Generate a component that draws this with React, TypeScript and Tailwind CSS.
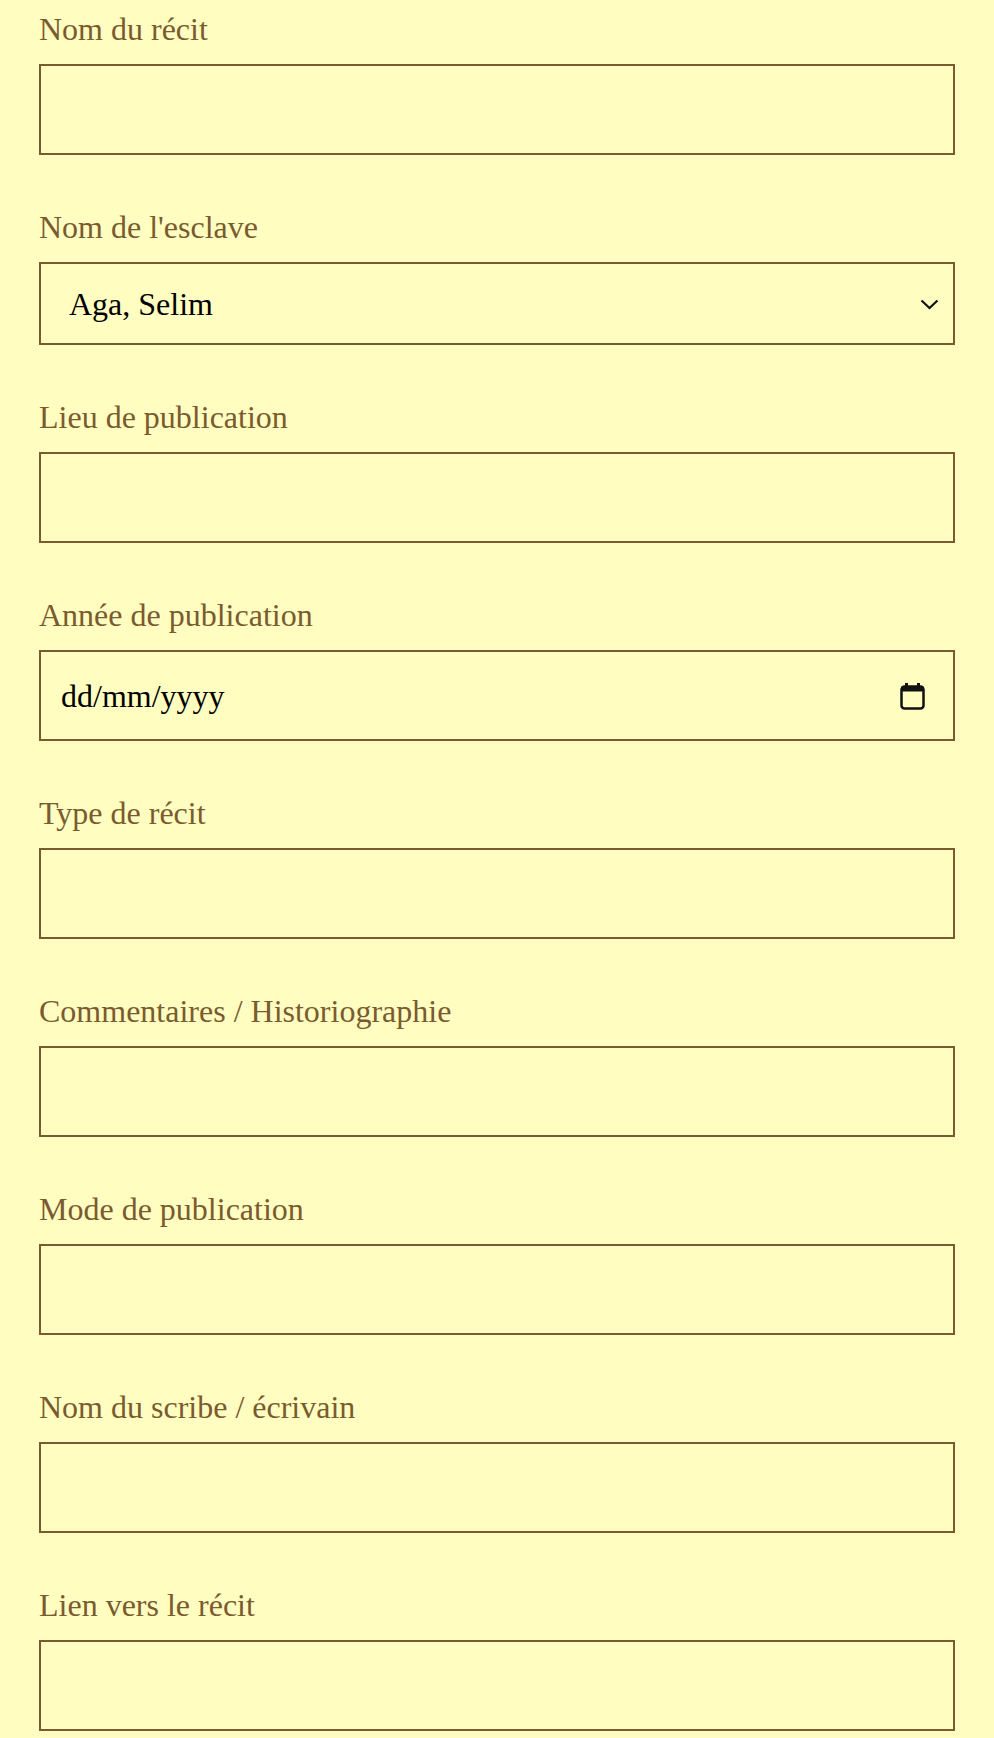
import React from 'react'

const fields = [
  { label: 'Nom du récit', kind: 'text' },
  { label: "Nom de l'esclave", kind: 'select' },
  { label: 'Lieu de publication', kind: 'text' },
  { label: 'Année de publication', kind: 'date' },
  { label: 'Type de récit', kind: 'text' },
  { label: 'Commentaires / Historiographie', kind: 'text' },
  { label: 'Mode de publication', kind: 'text' },
  { label: 'Nom du scribe / écrivain', kind: 'text' },
  { label: 'Lien vers le récit', kind: 'text' },
]

function CalendarIcon() {
  return (
    <svg width="25" height="28" viewBox="0 0 25 28" fill="none">
      <rect x="1.5" y="4.5" width="22" height="22" rx="3" stroke="#111" strokeWidth="2.5" />
      <rect x="1.5" y="4.5" width="22" height="5" fill="#111" />
      <rect x="5" y="1" width="3" height="5" fill="#111" />
      <rect x="17" y="1" width="3" height="5" fill="#111" />
    </svg>
  )
}

function Chevron() {
  return (
    <svg width="19" height="11" viewBox="0 0 19 11" fill="none">
      <path d="M1.5 1.5 L9.5 9 L17.5 1.5" stroke="#111" strokeWidth="2.2" />
    </svg>
  )
}

export default function App() {
  return (
    <div className="min-h-[1738px] w-full bg-[#fffdc0] px-[39px] pb-[40px] pt-[12px] font-['Liberation_Serif',_'Times_New_Roman',_serif]">
      {fields.map((f, i) => (
        <div key={i} className={i === 0 ? '' : 'mt-[55px]'}>
          <label className="block text-[32px] leading-[35px] text-[#7a5b2f]">{f.label}</label>
          {f.kind === 'text' && (
            <input
              type="text"
              className="mt-[17px] block h-[91px] w-[916px] border-2 border-[#7a5b2f] bg-transparent px-[22px] text-[32px] outline-none"
            />
          )}
          {f.kind === 'select' && (
            <div className="relative mt-[17px] h-[83px] w-[916px]">
              <select className="h-full w-full appearance-none border-2 border-[#7a5b2f] bg-transparent pl-[28px] text-[32px] text-black outline-none">
                <option>Aga, Selim</option>
              </select>
              <span className="pointer-events-none absolute right-[16px] top-[37px]">
                <Chevron />
              </span>
            </div>
          )}
          {f.kind === 'date' && (
            <div className="mt-[17px] flex h-[91px] w-[916px] items-center justify-between border-2 border-[#7a5b2f] pl-[20px] pr-[28px] text-[32px] text-black">
              <span>dd/mm/yyyy</span>
              <CalendarIcon />
            </div>
          )}
        </div>
      ))}
    </div>
  )
}
